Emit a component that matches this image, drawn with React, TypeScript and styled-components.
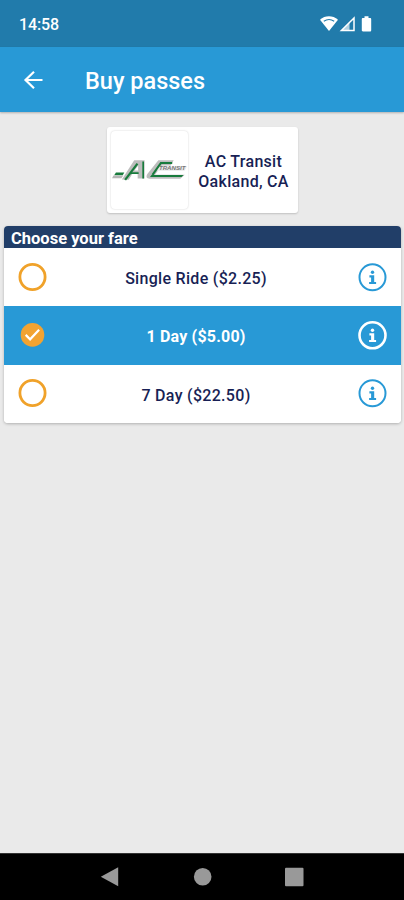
import React from 'react';
import styled, { createGlobalStyle } from 'styled-components';

const GlobalStyle = createGlobalStyle`
  * { box-sizing: border-box; }
  body { margin: 0; font-family: Roboto, "Liberation Sans", sans-serif; }
`;

const Screen = styled.div`
  display: flex;
  flex-direction: column;
  width: 404px;
  height: 900px;
  background: #eaeaea;
  overflow: hidden;
`;

const StatusBar = styled.div`
  display: flex;
  justify-content: space-between;
  height: 47px;
  flex: none;
  padding: 0 30px 0 19px;
  background: #217bab;
  color: #fff;
`;

const Clock = styled.span`
  font-size: 16px;
  line-height: 19px;
  padding-top: 15px;
  font-weight: 500;
  letter-spacing: -0.1px;
`;

const StatusIcons = styled.svg`
  width: 54px;
  height: 18px;
  margin-top: 15px;
  display: block;
`;

const AppBar = styled.header`
  display: flex;
  align-items: center;
  height: 65px;
  flex: none;
  padding-left: 21px;
  gap: 40px;
  background: #2899d6;
  color: #fff;
  box-shadow: 0 1px 2px rgba(0, 0, 0, 0.25);
`;

const BackIcon = styled.svg`
  width: 24px;
  height: 24px;
`;

const Title = styled.h1`
  margin: 3px 0 0;
  font-size: 23.5px;
  line-height: 28px;
  font-weight: 500;
`;

const Content = styled.main`
  display: flex;
  flex-direction: column;
  flex: 1;
`;

const AgencyCard = styled.section`
  display: flex;
  align-items: center;
  align-self: center;
  width: 191px;
  height: 86px;
  margin: 15px 0 0;
  padding-left: 4px;
  background: #fff;
  border-radius: 3px;
  box-shadow: 0 1px 2px rgba(0, 0, 0, 0.18);
`;

const LogoTile = styled.div`
  width: 77px;
  height: 78px;
  border-radius: 4px;
  box-shadow: 0 0 2px rgba(0, 0, 0, 0.2);
  display: flex;
  align-items: center;
  justify-content: center;
`;

const Logo = styled.svg`
  width: 75px;
  height: 22px;
  display: block;
`;

const AgencyName = styled.div`
  flex: 1;
  text-align: center;
  color: #181f55;
  font-size: 16px;
  line-height: 19.5px;
  font-weight: 500;
  letter-spacing: 0.3px;
  padding: 3px 0 0 2px;
`;

const FareCard = styled.section`
  margin: 13px 3px 0 4px;
  background: #fff;
  border-radius: 4px;
  overflow: hidden;
  box-shadow: 0 1px 3px rgba(0, 0, 0, 0.25);
`;

const FareHeader = styled.h2`
  margin: 0;
  height: 22px;
  padding: 3px 0 0 7px;
  background: #213e68;
  color: #fff;
  font-size: 16.5px;
  line-height: 20px;
  font-weight: 700;
`;

const FareRow = styled.div<{ $selected: boolean }>`
  display: grid;
  grid-template-columns: 29px 1fr 29px;
  align-items: center;
  height: 58.4px;
  padding: 0 14px;
  color: ${(p) => (p.$selected ? '#fff' : '#181f55')};
  background: ${(p) => (p.$selected ? '#2899d6' : '#fff')};
  font-weight: ${(p) => (p.$selected ? 700 : 500)};
`;

const FareLabel = styled.span<{ $selected: boolean }>`
  text-align: center;
  font-size: 16px;
  line-height: 20px;
  letter-spacing: ${(p) => (p.$selected ? '0.2px' : '0.3px')};
  padding: ${(p) => (p.$selected ? '2px' : '3.2px')} 13px 0 0;
`;

const RowIcon = styled.svg`
  width: 29px;
  height: 29px;
  display: block;
`;

const NavBar = styled.nav`
  display: flex;
  flex: none;
  height: 47px;
  padding: 13px 99px 0 100px;
  justify-content: space-between;
  background: #000;
  border-top: 1px solid #333;
`;

const NavIcon = styled.svg`
  width: 20px;
  height: 20px;
  fill: #999;
`;

const AgencyLogo = () => (
  <Logo viewBox="0 0 76 22" role="img" aria-label="AC Transit">
    <path d="M4 13.5h8.5L10.8 16.3H2.2z" fill="#187b3c" />
    <path d="M1.5 16.5h10L9.5 19.3H0z" fill="#b5b5b5" />
    <path d="M10 20.5 22.5 1H33v18.5h-7V15h-5.5L17 21z" fill="#bdbdbd" />
    <path d="M13.3 21 25.8 4.5" stroke="#187b3c" strokeWidth="2.2" />
    <path d="M19 14.2h8M31.6 2.5v17" stroke="#187b3c" strokeWidth="1.7" />
    <path d="M22.8 11.5h3.7V6.5z" fill="#fff" />
    <path d="M62.5 1H47L36 14.8c-2 3.2-.8 5 2.2 5h31l4.5-4H43.5L50.5 6.5h9z" fill="#bdbdbd" />
    <path d="M61 4H49.5L41 16" fill="none" stroke="#187b3c" strokeWidth="2" />
    <path d="M38.5 18.2h32l2-2.2H40z" fill="#187b3c" />
    <path d="M48.5 7.5H76l-2.5 4.2H45.5z" fill="#e8e8e8" />
    <text x="47.5" y="11.4" textLength="27" lengthAdjust="spacingAndGlyphs" fontFamily="Liberation Sans" fontSize="4.7" fontStyle="italic" fontWeight="700" fill="#777">TRANSIT</text>
  </Logo>
);

const SelectIcon = ({ selected }: { selected: boolean }) => (
  <RowIcon viewBox="0 0 29 29" fill="none">
    {selected ? (
      <>
        <circle cx="14.5" cy="13.9" r="11.8" fill="#f2a331" />
        <path d="m7.7 13.9 4.4 4.4 9-9.5" stroke="#fff" strokeWidth="2.2" />
      </>
    ) : (
      <circle cx="14.5" cy="14" r="12.6" stroke="#f0a22a" strokeWidth="2.8" />
    )}
  </RowIcon>
);

const InfoIcon = ({ selected }: { selected: boolean }) => {
  const color = selected ? '#fff' : '#2899d6';
  return (
    <RowIcon viewBox="0 0 29 29" fill="none">
      <circle cx="14.5" cy="14.3" r="13" stroke={color} strokeWidth={selected ? 2.6 : 2} />
      <circle cx="14.5" cy="9.2" r="1.7" fill={color} />
      <path d="M11.4 12.3h4.8v6.6h1.9v2h-7v-2h2v-4.5h-1.7z" fill={color} />
    </RowIcon>
  );
};

const fares = [
  { label: 'Single Ride ($2.25)', selected: false },
  { label: '1 Day ($5.00)', selected: true },
  { label: '7 Day ($22.50)', selected: false },
];

export default function App() {
  return (
    <Screen>
      <GlobalStyle />
      <StatusBar>
        <Clock>14:58</Clock>
        <StatusIcons viewBox="0 0 54 18" fill="#fff">
          <path d="M0 4.8C5 .2 12.8.2 18 4.8L9 16z" />
          <path d="M3.8 6.2c3.2-2.1 7.2-2.1 10.4 0" fill="none" stroke="#217bab" strokeWidth="1.1" />
          <path d="M34 3v12.5H21.4z" fill="none" stroke="#fff" strokeWidth="1.5" />
          <path d="M29.5 7.5v7.5H22z" opacity=".65" />
          <path d="M43 3h1.500V1.300h4V3H50c.8 0 1.200.5 1.200 1.200v11c0 .8-.5 1.300-1.200 1.300h-7c-.8 0-1.200-.5-1.200-1.200V4.200c0-.7.4-1.200 1.200-1.200z" />
        </StatusIcons>
      </StatusBar>
      <AppBar>
        <BackIcon viewBox="0 0 24 24" fill="none" stroke="#fff" strokeWidth="2.2">
          <path d="M21.5 12H4M13 3.7 4.5 12l8.5 8.3" />
        </BackIcon>
        <Title>Buy passes</Title>
      </AppBar>
      <Content>
        <AgencyCard>
          <LogoTile>
            <AgencyLogo />
          </LogoTile>
          <AgencyName>
            AC Transit
            <br />
            Oakland, CA
          </AgencyName>
        </AgencyCard>
        <FareCard>
          <FareHeader>Choose your fare</FareHeader>
          {fares.map((fare) => (
            <FareRow key={fare.label} $selected={fare.selected}>
              <SelectIcon selected={fare.selected} />
              <FareLabel $selected={fare.selected}>{fare.label}</FareLabel>
              <InfoIcon selected={fare.selected} />
            </FareRow>
          ))}
        </FareCard>
      </Content>
      <NavBar>
        <NavIcon viewBox="0 0 20 20">
          <path d="M.8 9.8 18.2.3v19z" />
        </NavIcon>
        <NavIcon viewBox="0 0 20 20">
          <circle cx="9.7" cy="9.8" r="8.8" />
        </NavIcon>
        <NavIcon viewBox="0 0 20 20">
          <rect x="0" y=".7" width="18.5" height="18.5" rx="1" />
        </NavIcon>
      </NavBar>
    </Screen>
  );
}
